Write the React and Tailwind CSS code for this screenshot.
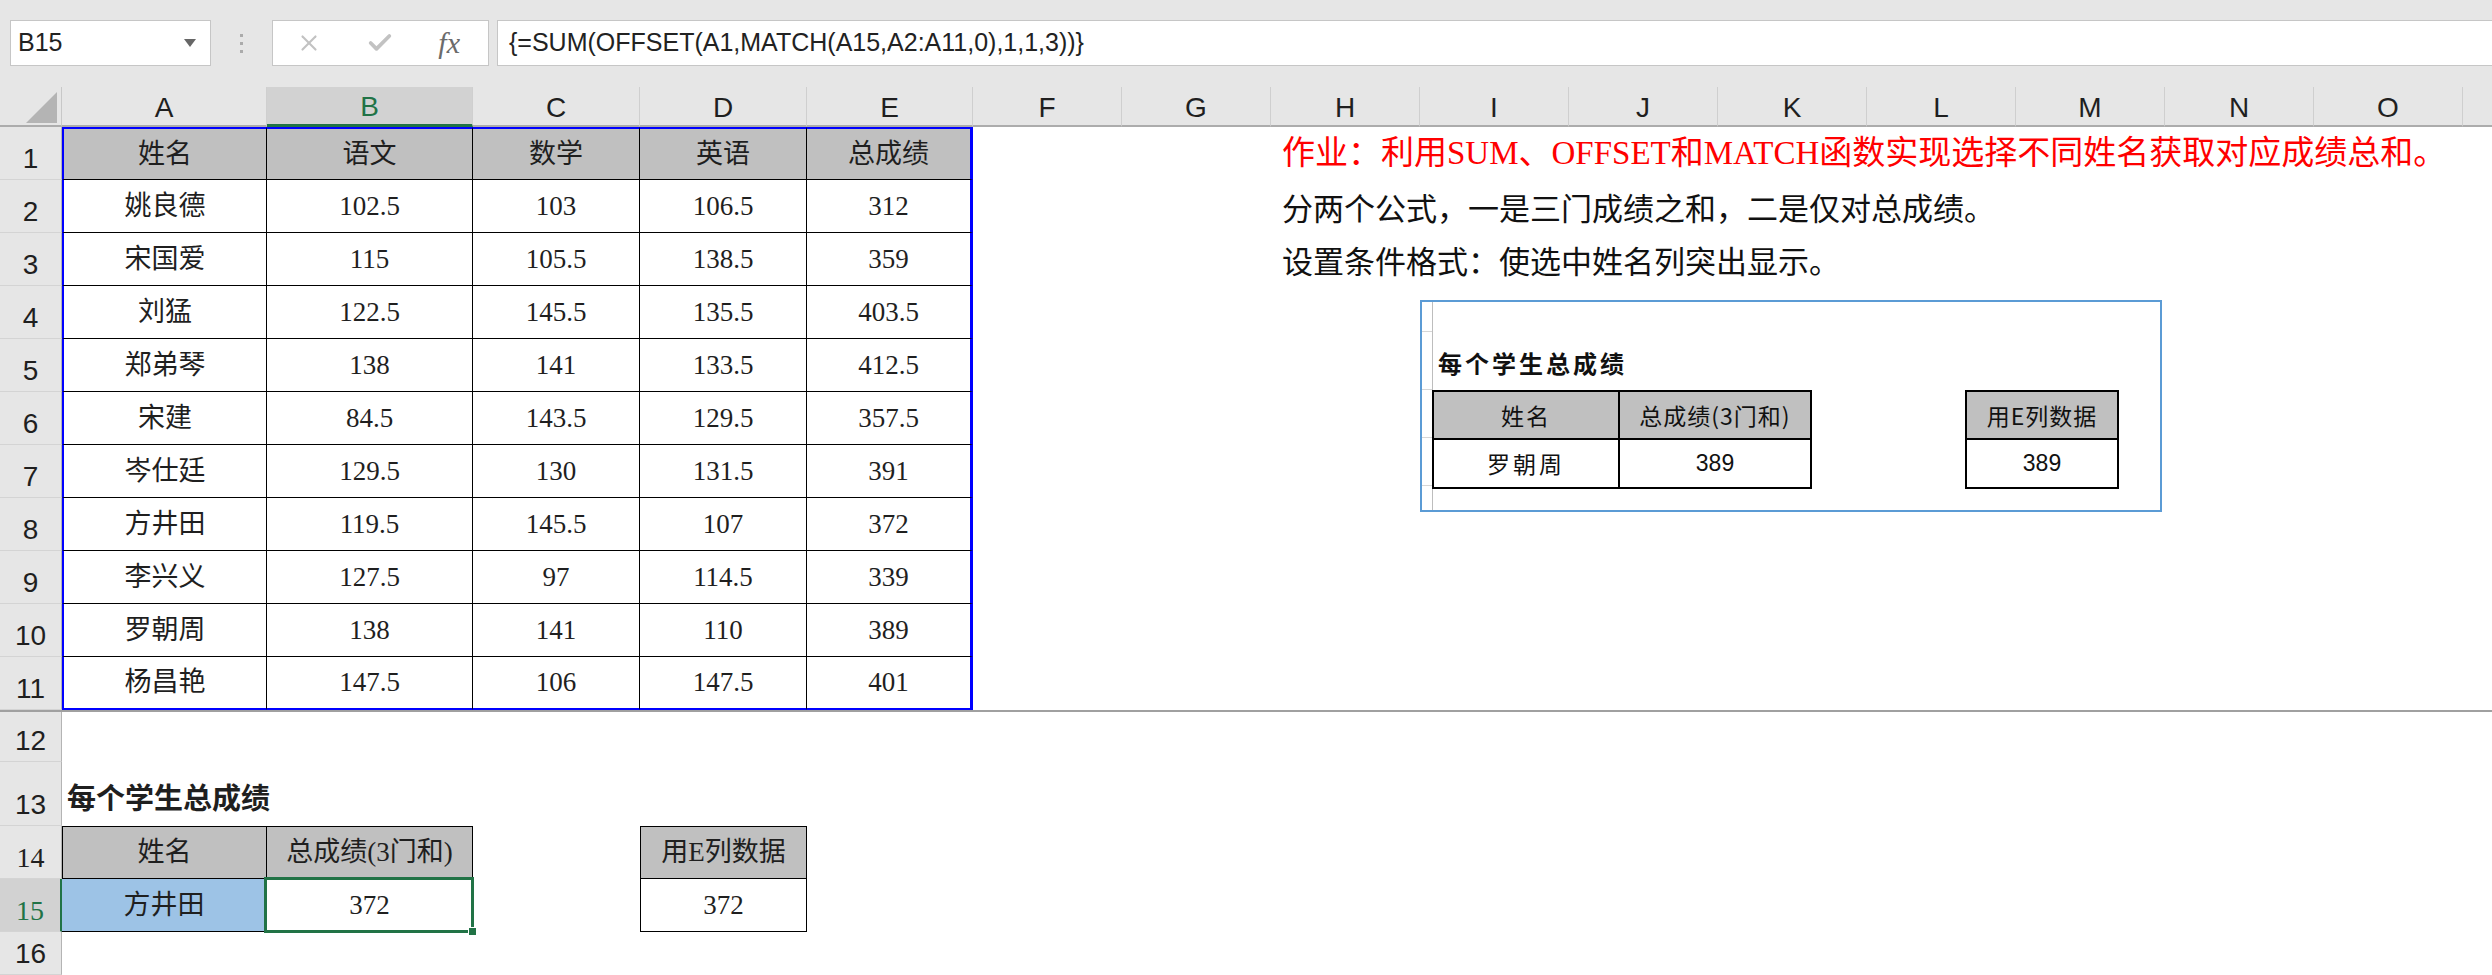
import { X, Check } from 'lucide-react';

const scores = [
  ['姚良德', '102.5', '103', '106.5', '312'],
  ['宋国爱', '115', '105.5', '138.5', '359'],
  ['刘猛', '122.5', '145.5', '135.5', '403.5'],
  ['郑弟琴', '138', '141', '133.5', '412.5'],
  ['宋建', '84.5', '143.5', '129.5', '357.5'],
  ['岑仕廷', '129.5', '130', '131.5', '391'],
  ['方井田', '119.5', '145.5', '107', '372'],
  ['李兴义', '127.5', '97', '114.5', '339'],
  ['罗朝周', '138', '141', '110', '389'],
  ['杨昌艳', '147.5', '106', '147.5', '401'],
];

const widths = ['w-[205px]', 'w-[206px]', 'w-[167px]', 'w-[167px]', 'w-[166px]'];
// P is only partly on screen, its letter falls outside
const restCols = ['F', 'G', 'H', 'I', 'J', 'K', 'L', 'M', 'N', 'O', ''];

const cellFont = "font-['Liberation_Serif','Noto_Sans_CJK_SC',serif]";

function RowHead({ n, active }) {
  return (
    <div
      className={
        'w-[62px] shrink-0 flex items-end justify-center pb-[6px] text-[28px] leading-none border-b border-b-[#d4d4d4] ' +
        (active
          ? 'bg-[#d2d2d2] text-[#217346] border-r-2 border-r-[#217346]'
          : 'bg-[#e6e6e6] text-[#1f1f1f] border-r border-r-[#b4b4b4]')
      }
    >
      {n}
    </div>
  );
}

function Toolbar() {
  return (
    <div className="h-[87px] bg-[#e6e6e6] flex items-start pt-[20px] pl-[10px]">
      <div className="w-[201px] h-[46px] shrink-0 bg-white border border-[#c6c6c6] flex items-center justify-between pl-[7px] pr-[14px]">
        <span className="text-[25px] text-[#222]">B15</span>
        <svg width="12" height="8" viewBox="0 0 12 8">
          <polygon points="0,0 12,0 6,8" fill="#666" />
        </svg>
      </div>
      <div className="w-[61px] h-[46px] shrink-0 flex flex-col items-center justify-center gap-[5px]">
        <span className="w-[3px] h-[3px] bg-[#ababab]" />
        <span className="w-[3px] h-[3px] bg-[#ababab]" />
        <span className="w-[3px] h-[3px] bg-[#ababab]" />
      </div>
      <div className="w-[217px] h-[46px] shrink-0 bg-white border border-[#c6c6c6] grid grid-cols-3 items-center justify-items-center">
        <X size={26} strokeWidth={2} color="#c2c2c2" />
        <Check size={28} strokeWidth={3.2} color="#c2c2c2" />
        <span className="font-['Liberation_Serif',serif] italic text-[30px] text-[#6b6b6b] leading-none pr-[6px]">fx</span>
      </div>
      <div className="ml-[8px] flex-1 h-[46px] bg-white border border-r-0 border-[#c6c6c6] flex items-center pl-[11px] text-[25px] text-[#222] whitespace-nowrap">
        {'{=SUM(OFFSET(A1,MATCH(A15,A2:A11,0),1,1,3))}'}
      </div>
    </div>
  );
}

function ColumnHeaders() {
  const main = ['A', 'B', 'C', 'D', 'E'];
  return (
    <div className="flex h-[40px] bg-[#e6e6e6] text-[28px] leading-none">
      <div className="w-[62px] shrink-0 border-r border-r-[#c8c8c8] border-b-2 border-b-[#acacac] flex items-end justify-end pr-[4px] pb-[2px]">
        <svg width="31" height="31" viewBox="0 0 31 31">
          <polygon points="31,0 31,31 0,31" fill="#b4b4b4" />
        </svg>
      </div>
      {main.map((c, i) => (
        <div
          key={c}
          className={
            widths[i] +
            ' shrink-0 flex items-center justify-center pt-[3px] border-r border-r-[#cfcfcf] ' +
            (c === 'B'
              ? 'bg-[#d2d2d2] text-[#217346] border-b-[3px] border-b-[#217346]'
              : 'text-[#1f1f1f] border-b-2 border-b-[#acacac]')
          }
        >
          {c}
        </div>
      ))}
      {restCols.map((c, i) => (
        <div
          key={i}
          className="w-[149px] shrink-0 flex items-center justify-center pt-[3px] border-r border-r-[#cfcfcf] border-b-2 border-b-[#acacac] text-[#1f1f1f]"
        >
          {c}
        </div>
      ))}
    </div>
  );
}

function TableRow({ n, cells, header, last, note }) {
  return (
    <div className="flex h-[53px]">
      <RowHead n={n} />
      {cells.map((v, i) => (
        <div
          key={i}
          className={
            widths[i] +
            ' shrink-0 flex items-center justify-center text-[27px] leading-none ' +
            cellFont +
            (header ? ' bg-[#c0c0c0] border-t-2 border-t-[#0000ff]' : ' bg-white') +
            (i === 0 ? ' border-l-2 border-l-[#0000ff]' : '') +
            (i === 4 ? ' border-r-[3px] border-r-[#0000ff]' : ' border-r border-r-black') +
            (last ? ' border-b-2 border-b-[#0000ff]' : ' border-b border-b-black')
          }
        >
          {v}
        </div>
      ))}
      <div className="flex-1 flex items-center pl-[309px] whitespace-nowrap leading-none">{note}</div>
    </div>
  );
}

function Picture() {
  return (
    <div className="absolute left-[1420px] top-[300px] w-[742px] h-[212px] bg-white border-2 border-[#5b9bd5] flex font-['Noto_Sans_CJK_SC',sans-serif] text-[#111]">
      <div className="w-[11px] shrink-0 flex flex-col border-r border-r-[#bdbdbd]">
        <div className="h-[30px] border-b border-b-[#d6d6d6]" />
        <div className="h-[58px] border-b border-b-[#d6d6d6]" />
        <div className="h-[48px] border-b border-b-[#d6d6d6]" />
        <div className="h-[48px] border-b border-b-[#d6d6d6]" />
      </div>
      <div className="flex-1 flex flex-col">
        <div className="h-[88px] flex items-center pt-[34px] pl-[5px] text-[24px] font-bold tracking-[3px] leading-none">
          每个学生总成绩
        </div>
        <div className="flex -ml-px">
          <div className="w-[380px] border-t-2 border-l-2 border-black">
            <div className="flex h-[48px] bg-[#c0c0c0] text-[23px] leading-none">
              <div className="w-[186px] flex items-center justify-center border-r-2 border-b-2 border-black tracking-[2px]">姓名</div>
              <div className="w-[192px] flex items-center justify-center border-r-2 border-b-2 border-black tracking-[1px]">总成绩(3门和)</div>
            </div>
            <div className="flex h-[49px] text-[23px] leading-none">
              <div className="w-[186px] flex items-center justify-center border-r-2 border-b-2 border-black tracking-[3px]">罗朝周</div>
              <div className="w-[192px] flex items-center justify-center border-r-2 border-b-2 border-black font-['Liberation_Sans',sans-serif]">389</div>
            </div>
          </div>
          <div className="w-[154px] ml-[153px] border-t-2 border-l-2 border-black">
            <div className="h-[48px] bg-[#c0c0c0] flex items-center justify-center border-r-2 border-b-2 border-black text-[23px] leading-none tracking-[1px]">
              用E列数据
            </div>
            <div className="h-[49px] flex items-center justify-center border-r-2 border-b-2 border-black text-[23px] leading-none font-['Liberation_Sans',sans-serif]">
              389
            </div>
          </div>
        </div>
      </div>
    </div>
  );
}

export default function App() {
  const notes = [
    <span className={"text-[33px] text-[#ff0000] " + cellFont}>作业：利用SUM、OFFSET和MATCH函数实现选择不同姓名获取对应成绩总和。</span>,
    <span className="text-[31px] text-[#111] font-['Noto_Sans_CJK_SC',sans-serif]">分两个公式，一是三门成绩之和，二是仅对总成绩。</span>,
    <span className="text-[31px] text-[#111] font-['Noto_Sans_CJK_SC',sans-serif]">设置条件格式：使选中姓名列突出显示。</span>,
  ];

  return (
    <div className="relative w-[2492px] h-[975px] overflow-hidden bg-white font-['Liberation_Sans',sans-serif] text-[#1f1f1f]">
      <Toolbar />
      <ColumnHeaders />

      <TableRow n={1} header cells={['姓名', '语文', '数学', '英语', '总成绩']} note={notes[0]} />
      {scores.map((r, i) => (
        <TableRow key={i} n={i + 2} cells={r} last={i === scores.length - 1} note={notes[i + 1]} />
      ))}

      {/* row 12, under the split line */}
      <div className="flex h-[52px] border-t-2 border-t-[#a0a0a0]">
        <RowHead n={12} />
        <div className="flex-1" />
      </div>

      {/* row 13: title */}
      <div className="flex h-[64px]">
        <RowHead n={13} />
        <div className={'flex-1 flex items-end pl-[5px] pb-[12px] text-[29px] font-bold leading-none ' + cellFont}>
          每个学生总成绩
        </div>
      </div>

      {/* row 14 */}
      <div className={'flex h-[53px] text-[27px] leading-none ' + cellFont}>
        <RowHead n={14} />
        <div className="w-[205px] shrink-0 bg-[#c0c0c0] flex items-center justify-center border border-black">姓名</div>
        <div className="w-[206px] shrink-0 bg-[#c0c0c0] flex items-center justify-center border-t border-r border-b border-black whitespace-nowrap">
          总成绩(3门和)
        </div>
        <div className="w-[167px] shrink-0" />
        <div className="w-[167px] shrink-0 bg-[#c0c0c0] flex items-center justify-center border border-black">用E列数据</div>
        <div className="flex-1" />
      </div>

      {/* row 15: current selection */}
      <div className={'flex h-[53px] text-[27px] leading-none ' + cellFont}>
        <RowHead n={15} active />
        <div className="w-[205px] shrink-0 bg-[#9dc3e6] flex items-center justify-center border-r border-b border-black">方井田</div>
        <div className="relative w-[206px] shrink-0 bg-white flex items-center justify-center border-r border-b border-black">
          372
          <div className="absolute -left-[3px] -top-[2px] -right-[2px] -bottom-[2px] border-[3px] border-[#217346]" />
          <div className="absolute -right-[5px] -bottom-[5px] w-[9px] h-[9px] bg-[#217346] border border-white" />
        </div>
        <div className="w-[167px] shrink-0" />
        <div className="w-[167px] shrink-0 flex items-center justify-center border-l border-r border-b border-black">372</div>
        <div className="flex-1" />
      </div>

      {/* row 16, cut by the window */}
      <div className="flex h-[43px]">
        <RowHead n={16} />
        <div className="flex-1" />
      </div>

      <Picture />
    </div>
  );
}
